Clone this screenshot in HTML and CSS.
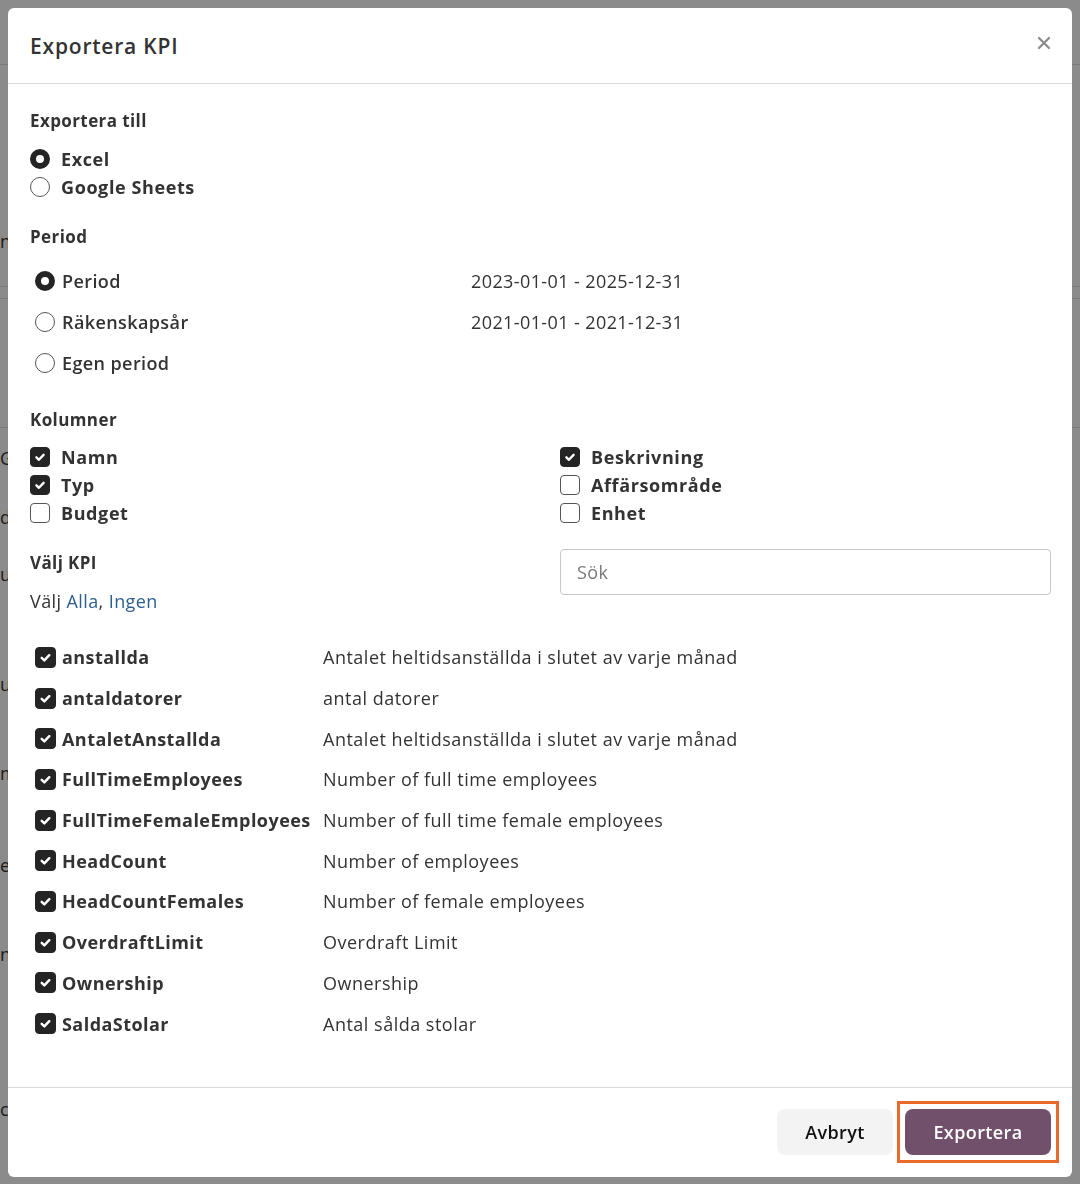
FILE: index.html
```html
<!DOCTYPE html>
<html lang="sv">
<head>
  <meta charset="UTF-8">
  <title>Exportera KPI</title>
  <meta name="viewport" content="width=device-width, initial-scale=1">
  <link rel="stylesheet" href="styles.css">
</head>
<body>

  <!-- sidan bakom dialogen -->
  <div class="sida">
    <div class="sida-rad linje h64"></div>
    <div class="sida-rad h130"></div>
    <div class="sida-rad linje h91"><span class="frag">n</span></div>
    <div class="sida-rad linje h11"></div>
    <div class="sida-rad h89"></div>
    <div class="sida-rad linje h39"></div>
    <div class="sida-rad h59"><span class="frag">G</span></div>
    <div class="sida-rad h59"><span class="frag">ds</span></div>
    <div class="sida-rad h55"><span class="frag">ul</span></div>
    <div class="sida-rad h33"></div>
    <div class="sida-rad h99"><span class="frag">ul</span></div>
    <div class="sida-rad h79"><span class="frag">m</span></div>
    <div class="sida-rad h105"><span class="frag">er</span></div>
    <div class="sida-rad h73"><span class="frag">n</span></div>
    <div class="sida-rad h79"></div>
    <div class="sida-rad h79"><span class="frag">co</span></div>
  </div>

  <div class="bakgrund">
    <div class="dialog">
      <div class="dialog-huvud">
        <h2>Exportera KPI</h2>
        <button class="stang" aria-label="Stäng">
          <svg width="14" height="14" viewBox="0 0 14 14"><path d="M2 2l10 10M12 2L2 12" stroke="#8a8a8a" stroke-width="2.2" stroke-linecap="round"/></svg>
        </button>
      </div>

      <div class="dialog-kropp">
        <h3>Exportera till</h3>
        <div class="val-lista">
          <label class="val"><span class="radio vald"></span>Excel</label>
          <label class="val"><span class="radio"></span>Google Sheets</label>
        </div>

        <h3>Period</h3>
        <div class="period-tabell">
          <label class="period-val"><span class="radio vald"></span>Period</label>
          <span class="period-datum">2023-01-01 - 2025-12-31</span>
          <label class="period-val"><span class="radio"></span>Räkenskapsår</label>
          <span class="period-datum">2021-01-01 - 2021-12-31</span>
          <label class="period-val"><span class="radio"></span>Egen period</label>
          <span class="period-datum"></span>
        </div>

        <h3>Kolumner</h3>
        <div class="kolumner">
          <label class="val"><span class="ruta bockad"><svg viewBox="0 0 20 20"><path d="M6 10.4l2.8 2.7L14 7.6"/></svg></span>Namn</label>
          <label class="val"><span class="ruta bockad"><svg viewBox="0 0 20 20"><path d="M6 10.4l2.8 2.7L14 7.6"/></svg></span>Typ</label>
          <label class="val"><span class="ruta"></span>Budget</label>
          <label class="val"><span class="ruta bockad"><svg viewBox="0 0 20 20"><path d="M6 10.4l2.8 2.7L14 7.6"/></svg></span>Beskrivning</label>
          <label class="val"><span class="ruta"></span>Affärsområde</label>
          <label class="val"><span class="ruta"></span>Enhet</label>
        </div>

        <div class="valj-kpi">
          <div>
            <h3 class="kpi-rubrik">Välj KPI</h3>
            <p class="valj-lankar">Välj <a href="#">Alla</a>, <a href="#">Ingen</a></p>
          </div>
          <input type="text" class="sok" placeholder="Sök">
        </div>

        <div class="kpi-tabell">
          <label class="kpi-namn"><span class="ruta bockad"><svg viewBox="0 0 20 20"><path d="M6 10.4l2.8 2.7L14 7.6"/></svg></span>anstallda</label>
          <span>Antalet heltidsanställda i slutet av varje månad</span>
          <label class="kpi-namn"><span class="ruta bockad"><svg viewBox="0 0 20 20"><path d="M6 10.4l2.8 2.7L14 7.6"/></svg></span>antaldatorer</label>
          <span>antal datorer</span>
          <label class="kpi-namn"><span class="ruta bockad"><svg viewBox="0 0 20 20"><path d="M6 10.4l2.8 2.7L14 7.6"/></svg></span>AntaletAnstallda</label>
          <span>Antalet heltidsanställda i slutet av varje månad</span>
          <label class="kpi-namn"><span class="ruta bockad"><svg viewBox="0 0 20 20"><path d="M6 10.4l2.8 2.7L14 7.6"/></svg></span>FullTimeEmployees</label>
          <span>Number of full time employees</span>
          <label class="kpi-namn"><span class="ruta bockad"><svg viewBox="0 0 20 20"><path d="M6 10.4l2.8 2.7L14 7.6"/></svg></span>FullTimeFemaleEmployees</label>
          <span>Number of full time female employees</span>
          <label class="kpi-namn"><span class="ruta bockad"><svg viewBox="0 0 20 20"><path d="M6 10.4l2.8 2.7L14 7.6"/></svg></span>HeadCount</label>
          <span>Number of employees</span>
          <label class="kpi-namn"><span class="ruta bockad"><svg viewBox="0 0 20 20"><path d="M6 10.4l2.8 2.7L14 7.6"/></svg></span>HeadCountFemales</label>
          <span>Number of female employees</span>
          <label class="kpi-namn"><span class="ruta bockad"><svg viewBox="0 0 20 20"><path d="M6 10.4l2.8 2.7L14 7.6"/></svg></span>OverdraftLimit</label>
          <span>Overdraft Limit</span>
          <label class="kpi-namn"><span class="ruta bockad"><svg viewBox="0 0 20 20"><path d="M6 10.4l2.8 2.7L14 7.6"/></svg></span>Ownership</label>
          <span>Ownership</span>
          <label class="kpi-namn"><span class="ruta bockad"><svg viewBox="0 0 20 20"><path d="M6 10.4l2.8 2.7L14 7.6"/></svg></span>SaldaStolar</label>
          <span>Antal sålda stolar</span>
        </div>
      </div>

      <div class="dialog-fot">
        <button class="knapp avbryt">Avbryt</button>
        <span class="markering"><button class="knapp exportera">Exportera</button></span>
      </div>
    </div>
  </div>

</body>
</html>
```

FILE: styles.css
```css
:root {
  --text: #333;
  --mork: #242424;
  --linje: #d9d9d9;
  --lila: #71506b;
  --lank: #2c5f8d;
  --orange: #ea6a2c;
}

body {
  font-family: 'Open Sans', Lato, sans-serif;
  margin: 0;
  color: var(--text);
  background-color: #fff;
  overflow: hidden;
}

/* sidan bakom */
.sida {
  height: 1184px;
}

.sida-rad {
  display: flex;
  align-items: center;
}

.sida-rad.linje {
  border-bottom: 1px solid #e2e2e2;
}

.h11 { height: 11px; }
.h33 { height: 33px; }
.h39 { height: 39px; }
.h55 { height: 55px; }
.h59 { height: 59px; }
.h64 { height: 64px; }
.h73 { height: 73px; }
.h79 { height: 79px; }
.h89 { height: 89px; }
.h91 { height: 91px; }
.h99 { height: 99px; }
.h105 { height: 105px; }
.h130 { height: 130px; }

.frag {
  font-size: 18px;
  color: #333;
  line-height: 1;
}

/* dialog */
.bakgrund {
  position: fixed;
  inset: 0;
  background-color: rgba(0, 0, 0, 0.455);
  display: flex;
  justify-content: center;
  padding-top: 8px;
}

.dialog {
  width: 1064px;
  height: 1169px;
  background-color: #fff;
  border-radius: 6px;
  display: flex;
  flex-direction: column;
}

.dialog-huvud {
  height: 76px;
  display: flex;
  align-items: center;
  justify-content: space-between;
  padding: 0 22px;
  border-bottom: 1px solid var(--linje);
  box-sizing: border-box;
}

.dialog-huvud h2 {
  margin: 0;
  font-size: 21px;
  font-weight: 600;
  color: #333;
  letter-spacing: 0.8px;
}

.stang {
  background: none;
  border: none;
  padding: 0;
  margin-right: -1px;
  margin-top: -6px;
  cursor: pointer;
  display: flex;
}

.dialog-kropp {
  flex: 1;
  padding: 24px 21px 0 22px;
}

h3 {
  margin: 0;
  padding-top: 1px;
  font-size: 17px;
  line-height: 24px;
  font-weight: 700;
  color: #333;
  letter-spacing: 0.4px;
}

.val-lista {
  display: flex;
  flex-direction: column;
  margin: 12px 0 23px;
}

.val {
  height: 28px;
  display: flex;
  align-items: center;
  gap: 11px;
  font-size: 18px;
  font-weight: 700;
  letter-spacing: 0.6px;
}

.radio {
  width: 20px;
  height: 20px;
  border-radius: 50%;
  border: 1px solid #555;
  box-sizing: border-box;
  background-color: #fff;
  flex-shrink: 0;
}

.radio.vald {
  border: 6px solid var(--mork);
}

.ruta {
  width: 20px;
  height: 20px;
  border-radius: 4px;
  border: 1px solid #555;
  box-sizing: border-box;
  flex-shrink: 0;
  display: flex;
}

.ruta.bockad {
  background-color: var(--mork);
  border-color: var(--mork);
}

.ruta svg {
  width: 100%;
  height: 100%;
}

.ruta svg path {
  fill: none;
  stroke: #fff;
  stroke-width: 2.6;
  stroke-linecap: round;
  stroke-linejoin: round;
}

.period-tabell {
  display: grid;
  grid-template-columns: 441px 1fr;
  grid-auto-rows: 41px;
  margin: 11px 0 24px;
  align-items: center;
}

.period-val {
  display: flex;
  align-items: center;
  gap: 7px;
  padding-left: 5px;
  font-size: 18px;
  font-weight: 600;
  letter-spacing: 0.4px;
}

.period-datum {
  font-size: 18px;
  letter-spacing: 0.4px;
}

.kolumner {
  display: grid;
  grid-template-columns: 530px 1fr;
  grid-template-rows: repeat(3, 28px);
  grid-auto-flow: column;
  margin: 11px 0 22px;
}

.valj-kpi {
  display: grid;
  grid-template-columns: 530px 1fr;
}

.kpi-rubrik {
  margin-top: 1px;
}

.valj-lankar {
  margin: 14px 0 0;
  font-size: 18px;
  line-height: 24px;
  letter-spacing: 0.4px;
}

.valj-lankar a {
  color: var(--lank);
  text-decoration: none;
}

.sok {
  height: 46px;
  box-sizing: border-box;
  border: 1px solid #c8c8c8;
  border-radius: 4px;
  padding: 0 16px;
  font-family: inherit;
  font-size: 18px;
  letter-spacing: 0.4px;
  color: var(--text);
}

.sok::placeholder {
  color: #7a7a7a;
}

.kpi-tabell {
  display: grid;
  grid-template-columns: 293px 1fr;
  grid-auto-rows: 40.7px;
  align-items: center;
  margin-top: 24px;
  font-size: 18px;
  letter-spacing: 0.5px;
}

.kpi-namn {
  display: flex;
  align-items: center;
  gap: 6px;
  padding-left: 5px;
  font-weight: 700;
  letter-spacing: 0.45px;
}

.kpi-namn .ruta {
  width: 21px;
  height: 21px;
}

.dialog-fot {
  height: 90px;
  box-sizing: border-box;
  border-top: 1px solid var(--linje);
  display: flex;
  justify-content: flex-end;
  align-items: center;
  gap: 4px;
  padding: 0 13px 1px 0;
}

.knapp {
  height: 46px;
  border: none;
  border-radius: 8px;
  font-family: inherit;
  font-size: 18px;
  font-weight: 600;
  letter-spacing: 0.4px;
  cursor: pointer;
}

.avbryt {
  width: 116px;
  background-color: #f3f3f3;
  color: #111;
}

.exportera {
  width: 146px;
  background-color: var(--lila);
  color: #fff;
}

.markering {
  display: flex;
  padding: 5px;
  border: 3px solid var(--orange);
}
```
